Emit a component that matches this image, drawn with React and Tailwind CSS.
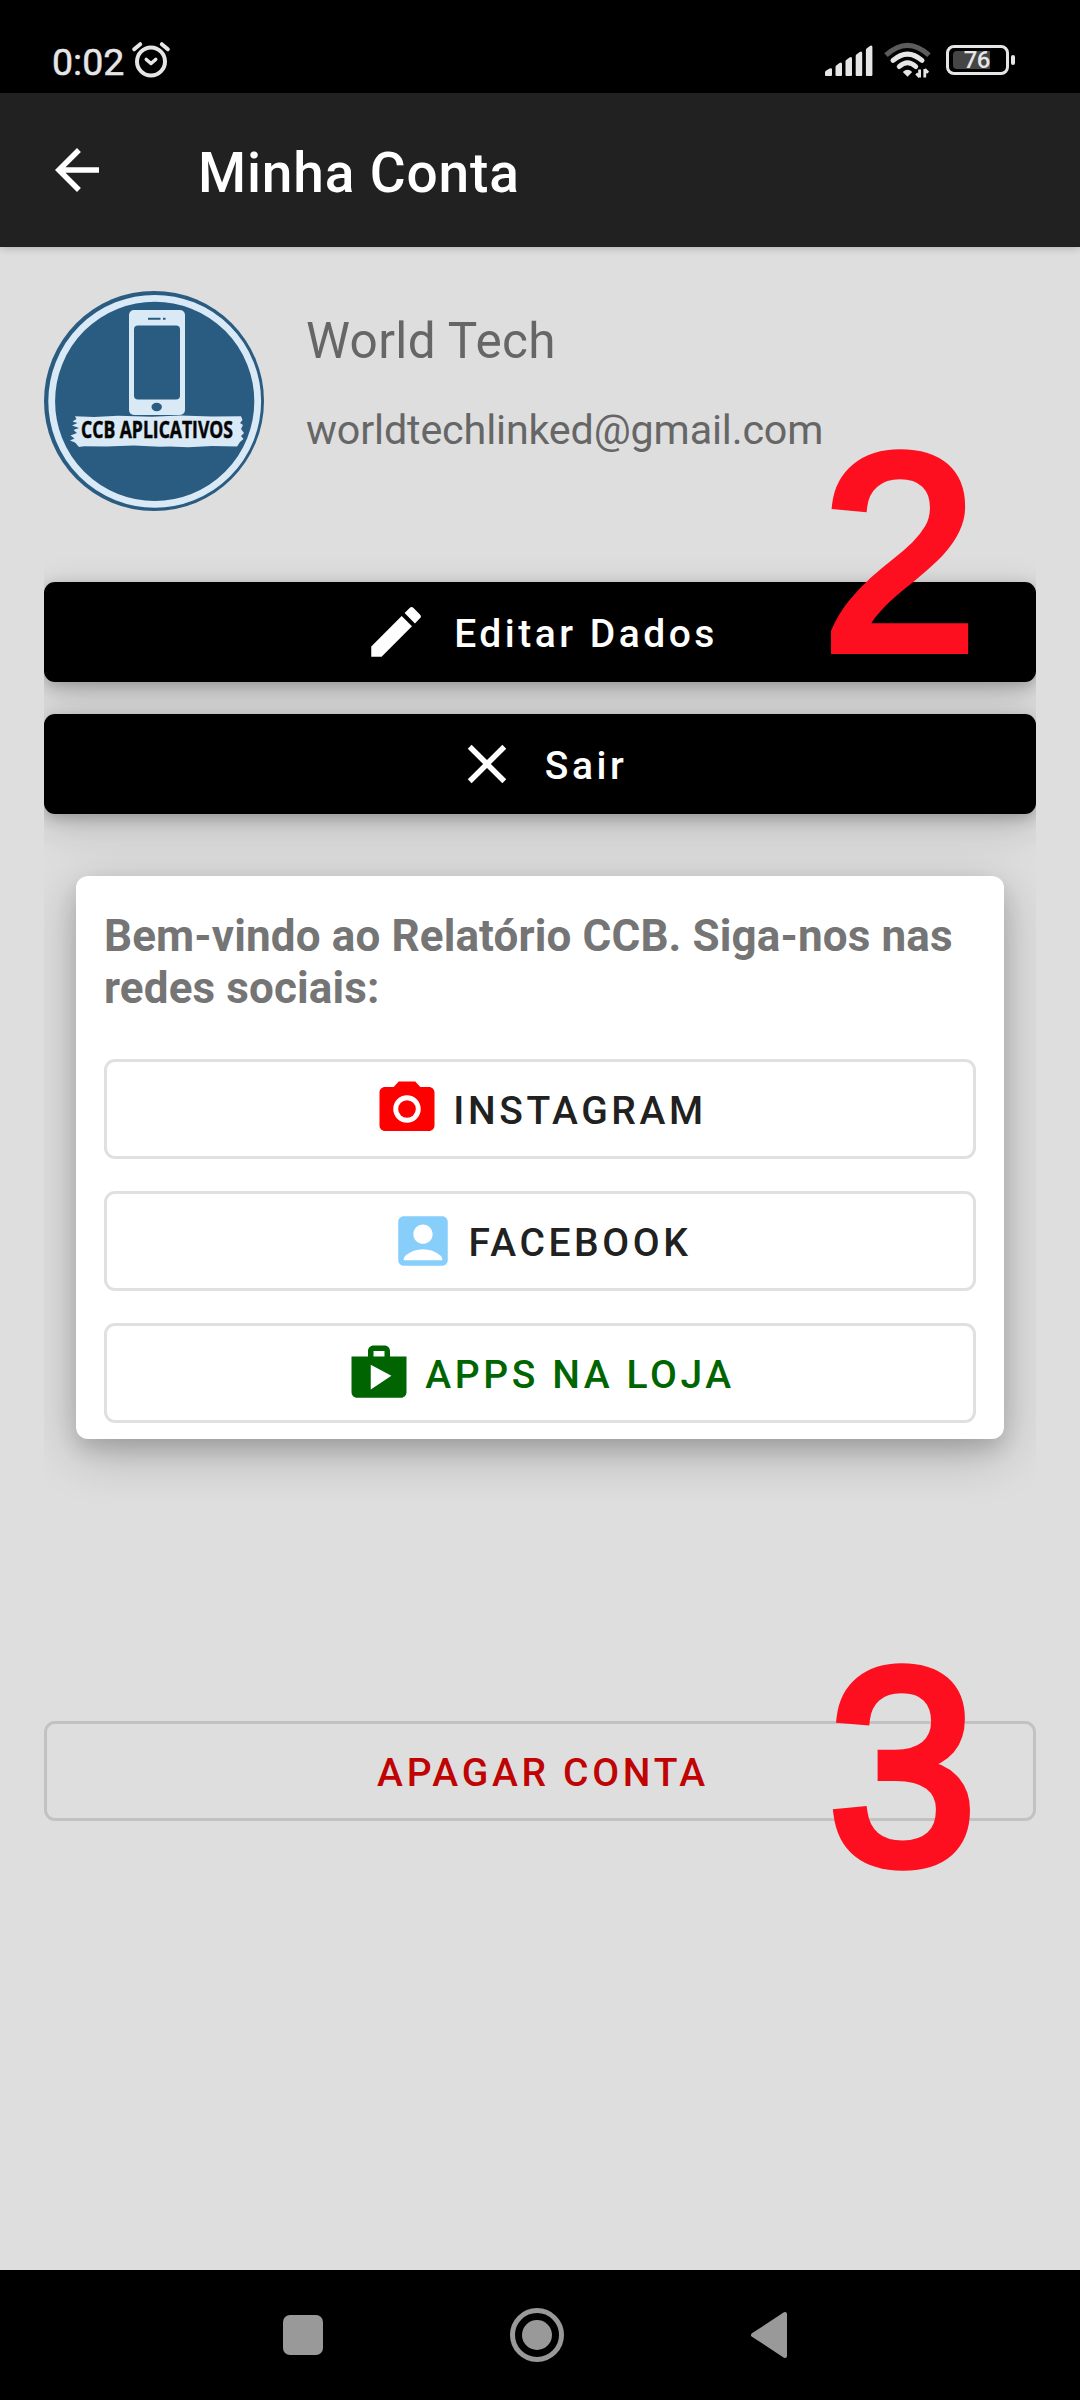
import React from 'react';
import { MdArrowBack, MdEdit, MdClose, MdCameraAlt, MdAccountBox, MdShop } from 'react-icons/md';

const socialLinks = [
  { id: 'instagram', label: 'INSTAGRAM', icon: MdCameraAlt, iconColor: 'text-[#ff0000]', textColor: 'text-[#212121]' },
  { id: 'facebook', label: 'FACEBOOK', icon: MdAccountBox, iconColor: 'text-[#87cefa]', textColor: 'text-[#212121]' },
  { id: 'store', label: 'APPS NA LOJA', icon: MdShop, iconColor: 'text-[#006400]', textColor: 'text-[#006400]' },
];

function StatusBar() {
  return (
    <div className="h-[93px] bg-black flex items-start justify-between pl-[52px] pr-[65px] text-[#e6e6e6]">
      <div className="flex items-start pt-[40px]">
        <span className="w-[73px] text-[37.5px] leading-[44px] [-webkit-text-stroke:0.5px_#e6e6e6]">0:02</span>
        <svg className="ml-[6px] mt-[1px]" width="40" height="38" viewBox="0 0 40 38" fill="none" stroke="currentColor" strokeLinecap="round">
          <circle cx="20" cy="20.5" r="14" strokeWidth="4" />
          <path d="M3.2 8.2 L9.2 3.2 M36.8 8.2 L30.8 3.2" strokeWidth="4" />
          <path d="M15.3 18.5 L20 22.5 L24.7 18.5" strokeWidth="3.6" strokeLinejoin="round" />
        </svg>
      </div>

      <div className="flex items-start pt-[42px]">
        {/* Signal */}
        <svg width="48" height="36" viewBox="0 0 48 36" fill="currentColor">
          <path d="M0 34v-3.500q0-1 1-1.800l3.500-2.200q2.500-1 2.500 1V33q0 1-1 1H1q-1 0-1-1z" />
          <path d="M10.500 33V25q0-1 1-1.800l3-2.200q2.500-1.500 2.500 1V33q0 1-1 1h-4.500q-1 0-1-1z" />
          <path d="M20.500 33V19.500q0-1 1-1.800l3-2.200q2.500-1.500 2.500 1V33q0 1-1 1h-4.500q-1 0-1-1z" />
          <path d="M30.700 33V14q0-1 1-1.800l3-2.200q2.500-1.500 2.500 1V33q0 1-1 1h-4.500q-1 0-1-1z" />
          <path d="M40.900 33V8q0-1 1-1.800l3-2.200q2.500-1.500 2.500 1V33q0 1-1 1h-4.500q-1 0-1-1z" />
        </svg>
        {/* Wifi */}
        <svg className="ml-[11px]" width="48" height="38" viewBox="0 0 48 38" fill="none" stroke="currentColor" strokeLinecap="round">
          <path d="M2 13.200Q23.500-6.500 45 13.200" stroke="#5c5c5c" strokeWidth="5" strokeLinecap="butt" />
          <path d="M9 18.400Q23.500 5.800 38 18.400" strokeWidth="5" />
          <path d="M15.300 24.500Q23.500 17 31.700 24.500" strokeWidth="5" />
          <path d="M18.800 30Q23.500 25.500 28.200 30L23.500 34.800z" fill="currentColor" stroke="none" />
          <path d="M35.600 27.500v8M32.300 31.500l3.300 3.500M40.800 35.500v-8.500M44.100 30.700l-3.300-3.500" strokeWidth="2.800" strokeLinecap="butt" />
        </svg>
        {/* Battery */}
        <div className="ml-[14px] mt-[3px] flex items-center gap-[2px]">
          <div className="w-[63px] h-[30px] border-[3px] border-[#e6e6e6] rounded-[8px] flex items-center p-[3px] pl-[4px]">
            <div className="w-[37px] h-[18px] bg-[#454545] rounded-l-[4px] flex items-center justify-end">
              <span className="text-[24px] leading-[24px] font-medium tracking-[-0.5px]">76</span>
            </div>
          </div>
          <div className="w-[4px] h-[10px] rounded-[2px] bg-[#e6e6e6]" />
        </div>
      </div>
    </div>
  );
}

function Logo() {
  return (
    <svg className="shrink-0 overflow-visible" width="220" height="220" viewBox="0 0 220 220">
      <circle cx="110" cy="110" r="110" fill="#2a5b80" />
      <circle cx="110.700" cy="110.300" r="103" fill="none" stroke="#d9e9f6" strokeWidth="6.800" />
      <rect x="85" y="19" width="56" height="105" rx="5" fill="#d9e9f6" />
      <rect x="90" y="34.500" width="46" height="74" rx="4" fill="#2a5b80" />
      <path d="M104 27.700h12.500M119 27.700h2.500" stroke="#2a5b80" strokeWidth="2" />
      <ellipse cx="112.700" cy="116" rx="5.200" ry="4.200" fill="#2a5b80" />
      <path
        d="M31 125.300L50 126L74 124.800L108 125.800L136 124.600L168 125.600L197 125.200L198.500 129L196 132L199 134L197 138L200 142L197 145L199.500 148L196 151L193 155.500L168 155L144 156.200L126 155.400L116 155.800L90 154.600L62 155.600L40 155.200L35 156L31 151.500L26 149.500L30.500 147.500L26.500 144.500L33 142L29.500 139L35 137L28 134.500L33.500 132L28.500 130.500L32.500 128Z"
        fill="#d9e9f6"
      />
      <text x="37" y="147" fontFamily="Open Sans, sans-serif" fontWeight="700" fontSize="23" textLength="152" lengthAdjust="spacingAndGlyphs" fill="#050505" stroke="#050505" strokeWidth="0.5">
        CCB APLICATIVOS
      </text>
    </svg>
  );
}

function ActionButton({ icon: Icon, label }) {
  return (
    <button className="h-[100px] w-full rounded-[11px] bg-black text-white flex items-center justify-center gap-[25px] pl-[1px] shadow-[0_4px_14px_rgba(0,0,0,0.22),0_12px_40px_rgba(0,0,0,0.18)]">
      <Icon size={66} />
      <span className="text-[39px] leading-[45px] font-medium tracking-[3.5px] pt-[5px]">{label}</span>
    </button>
  );
}

function SocialButton({ link }) {
  const Icon = link.icon;
  return (
    <button className="h-[100px] w-full rounded-[11px] border-[3px] border-[#e0e0e0] bg-white flex items-center justify-center gap-[13px] pl-[1px]">
      <Icon size={66} className={link.iconColor} />
      <span className={`text-[39px] leading-[45px] font-medium tracking-[3.6px] pt-[5px] ${link.textColor}`}>
        {link.label}
      </span>
    </button>
  );
}

export default function App() {
  return (
    <div className="relative w-[1080px] h-[2400px] overflow-hidden bg-[#dedede] font-[Roboto,sans-serif] flex flex-col">
      <StatusBar />

      {/* Toolbar */}
      <header className="h-[154px] shrink-0 bg-[#212121] flex items-center pl-[44px] shadow-[0_1px_8px_rgba(0,0,0,0.22)]">
        <MdArrowBack size={66} className="text-white" />
        <h1 className="ml-[88px] pt-[5px] text-[55px] leading-[64px] font-medium tracking-[0.85px] text-white">Minha Conta</h1>
      </header>

      <main className="flex-1 flex flex-col px-[44px] pt-[44px]">
        {/* Profile */}
        <section className="h-[220px] flex text-[#666666]">
          <Logo />
          <div className="ml-[42px] pt-[21px]">
            <p className="text-[49.5px] leading-[58px] tracking-[0.4px]">World Tech</p>
            <p className="mt-[36px] text-[41.25px] leading-[48px] tracking-[-0.15px]">worldtechlinked@gmail.com</p>
          </div>
        </section>

        {/* Actions and social card, shadows are cut at the column edges */}
        <section className="mt-[5px] h-[995px] pt-[66px] overflow-hidden flex flex-col">
          <div className="flex flex-col gap-[32px]">
            <ActionButton icon={MdEdit} label="Editar Dados" />
            <ActionButton icon={MdClose} label="Sair" />
          </div>

          <div className="mt-[62px] mx-[32px] h-[563px] rounded-[12px] bg-white px-[28px] pt-[34px] shadow-[0_10px_20px_rgba(0,0,0,0.12),0_14px_52px_rgba(0,0,0,0.24)]">
            <p className="h-[149px] text-[44px] leading-[52px] font-bold tracking-[0.13px] text-[#757575]">
              Bem-vindo ao Relatório CCB. Siga-nos nas redes sociais:
            </p>
            <div className="flex flex-col gap-[32px]">
              {socialLinks.map((link) => (
                <SocialButton key={link.id} link={link} />
              ))}
            </div>
          </div>
        </section>

        <button className="mt-[210px] h-[100px] rounded-[11px] border-[3px] border-[#c2c2c2] text-[39px] leading-[45px] font-medium tracking-[3.7px] text-[#c00404] pt-[5px] pl-[6px]">
          APAGAR CONTA
        </button>
      </main>

      {/* Step markers over the screen */}
      <span className="absolute left-[822px] top-[387px] font-['Liberation_Sans',Arial,sans-serif] text-[279px] leading-[330px] text-[#fd0f20] [-webkit-text-stroke:10px_#fd0f20]">2</span>
      <span className="absolute left-[828px] top-[1601px] origin-left scale-x-[0.96] font-['Liberation_Sans',Arial,sans-serif] text-[279px] leading-[330px] text-[#fd0f20] [-webkit-text-stroke:10px_#fd0f20]">3</span>

      {/* Navigation bar */}
      <nav className="h-[130px] shrink-0 bg-black flex items-center justify-between pl-[283px] pr-[292px]">
        <div className="w-[40px] h-[40px] rounded-[7px] bg-[#999999]" />
        <div className="w-[54px] h-[54px] rounded-full border-[5px] border-[#999999] flex items-center justify-center">
          <div className="w-[30px] h-[30px] rounded-full bg-[#999999]" />
        </div>
        <svg width="38" height="48" viewBox="0 0 38 48">
          <path d="M3 24L35 3v42z" fill="#999999" stroke="#999999" strokeWidth="4" strokeLinejoin="round" />
        </svg>
      </nav>
    </div>
  );
}
